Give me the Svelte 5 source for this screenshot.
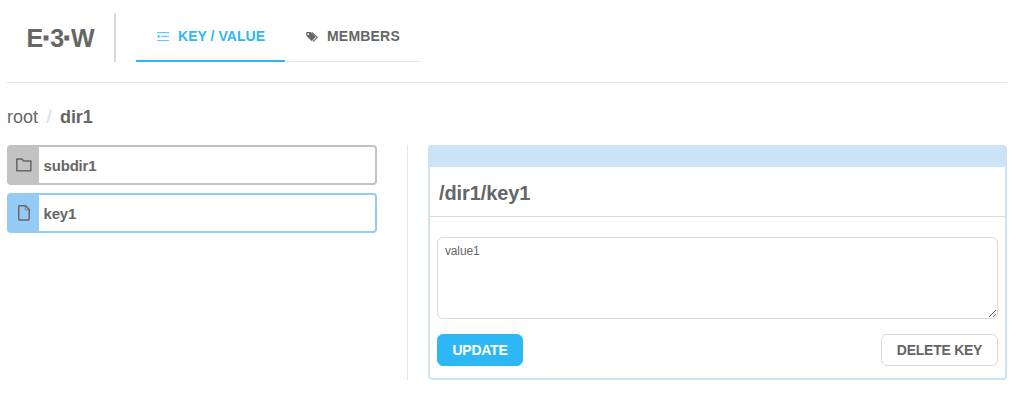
<script>
  const entries = [
    { name: 'subdir1', kind: 'dir' },
    { name: 'key1', kind: 'key' }
  ];
  let value = $state('value1');
</script>

<div class="page">
  <header>
    <div class="logo"><span>E<b>·</b>3<b>·</b>W</span></div>
    <nav>
      <a class="tab active">
        <svg width="12" height="12" viewBox="0 0 12 12" fill="none" stroke="currentColor">
          <path d="M0 1.5h12M4 5.5h8M0 9.5h12" opacity=".75" />
          <path d="M0 2.5h12M4 4.5h8" opacity=".2" />
          <path d="M0 5.5l2.5-1.7v3.4z" fill="currentColor" stroke="none" />
        </svg>
        <span class="kv">KEY / VALUE</span>
      </a>
      <a class="tab">
        <svg width="12" height="12" viewBox="0 0 12 12">
          <path fill="currentColor" fill-rule="evenodd" d="M.2 1.1h4.5l4.9 4.9-3.8 4.3L.4 5.1zM2.2 2.2a.9.9 0 1 0 .1 1.8.9.9 0 0 0-.1-1.8z" />
          <path d="M5.8 1.4l5.4 4.9-4 4.3" fill="none" stroke="currentColor" stroke-width="1.2" />
        </svg>
        <span class="members">MEMBERS</span>
      </a>
    </nav>
  </header>

  <div class="crumbs"><span class="root">root</span><i>/</i><b>dir1</b></div>

  <main>
    <section class="list">
      {#each entries as entry}
        <div class="entry {entry.kind}">
          <div class="icon">
            {#if entry.kind === 'dir'}
              <svg width="16" height="14" viewBox="0 0 16 14" fill="none" stroke="#666" stroke-width="1.5" stroke-linejoin="round">
                <path d="M.8 1h5.2l1.7 2.1h7.2v9.6H.8z" />
              </svg>
            {:else}
              <svg width="12" height="16" viewBox="0 0 12 16" fill="none" stroke="#666" stroke-width="1.5" stroke-linejoin="round">
                <path d="M1.7.8h5.8l3.7 3.8v9.2q0 1.2-1.2 1.2H1.9Q.7 15 .7 13.8V1.8Q.7.8 1.7.8z" />
                <path d="M7.3 1v3.8h3.8" stroke-width="1" opacity=".7" />
              </svg>
            {/if}
          </div>
          <span>{entry.name}</span>
        </div>
      {/each}
    </section>
    <section class="detail">
      <div class="panel">
        <div class="bar"></div>
        <h1><span>/dir1/key1</span></h1>
        <div class="body">
          <textarea bind:value spellcheck="false"></textarea>
          <div class="actions">
            <button class="primary"><span>UPDATE</span></button>
            <button class="delete"><span>DELETE KEY</span></button>
          </div>
        </div>
      </div>
    </section>
  </main>
</div>

<style>
  :global(body) {
    margin: 0;
    background: #fff;
  }
  .page,
  .page * {
    box-sizing: border-box;
  }
  .page {
    width: 1000px;
    margin-left: 7px;
    color: #666;
    font-family: "Liberation Sans", Arial, sans-serif;
  }
  header {
    display: flex;
    height: 83px;
    padding-top: 13px;
    border-bottom: 1px solid #e6e6e6;
  }
  .logo {
    display: flex;
    width: 109px;
    height: 49px;
    padding-left: 19.5px;
    border-right: 2px solid #d9d9d9;
    font-size: 25px;
    font-weight: 700;
    line-height: 51px;
    white-space: nowrap;
  }
  .logo span {
    letter-spacing: -0.7px;
  }
  .logo b {
    -webkit-text-stroke: 1.2px currentColor;
    stroke-linejoin: round;
    paint-order: stroke;
  }
  nav {
    display: flex;
    margin-left: 20px;
    height: 49px;
  }
  .tab {
    display: flex;
    width: 135px;
    height: 49px;
    padding-left: 21px;
    gap: 9px;
    border-bottom: 1px solid #e6e6e6;
    font-size: 14px;
    font-weight: 700;
    line-height: 46px;
    white-space: nowrap;
  }
  .tab.active {
    width: 149px;
    border-bottom: 2px solid #2db7f5;
    color: #2db7f5;
  }
  .kv {
    letter-spacing: 0.05px;
  }
  .members {
    letter-spacing: 0.2px;
  }
  .tab svg {
    flex: none;
    margin-top: 18px;
  }
  .crumbs {
    height: 62px;
    padding-top: 22px;
    font-size: 18px;
    line-height: 24px;
    white-space: pre;
  }
  .crumbs i {
    margin: 0 8.5px;
    color: #d9d9d9;
    font-style: normal;
  }
  .crumbs b {
    letter-spacing: -0.1px;
  }
  main {
    display: flex;
    height: 235px;
  }
  .list {
    display: flex;
    flex-direction: column;
    gap: 8px;
    width: 400px;
  }
  .entry {
    display: flex;
    width: 370px;
    height: 40px;
    border: 2px solid #c2c2c2;
    border-radius: 4px;
    font-size: 15px;
    font-weight: 700;
    line-height: 38px;
    letter-spacing: -0.18px;
  }
  .entry .icon {
    display: flex;
    align-items: center;
    justify-content: center;
    width: 30px;
    margin-right: 4.5px;
    background: #c2c2c2;
  }
  .entry.key .icon {
    background: #95caf4;
  }
  .entry.key {
    border-color: #95caf4;
  }
  .detail {
    width: 600px;
    padding-left: 20px;
    border-left: 1px solid #e6e6e6;
  }
  .panel {
    height: 235px;
    border: 2px solid #cce3f6;
    border-radius: 4px;
  }
  .bar {
    height: 20px;
    background: #cce3f6;
  }
  h1 {
    height: 50px;
    margin: 0;
    padding-left: 9px;
    border-bottom: 1px solid #d9d9d9;
    font-size: 20px;
    line-height: 52px;
    letter-spacing: -0.1px;
  }
  .body {
    padding: 20px 7px 0;
  }
  textarea {
    display: block;
    width: 100%;
    height: 82px;
    margin: 0;
    padding: 4px 7px;
    border: 1px solid #d9d9d9;
    border-radius: 6px;
    outline: none;
    background: #fff;
    color: #666;
    font: 12px/18px "Liberation Sans", Arial, sans-serif;
    letter-spacing: -0.15px;
    resize: vertical;
  }
  .actions {
    display: flex;
    justify-content: space-between;
    margin-top: 15px;
  }
  button {
    width: 86px;
    height: 32px;
    padding: 0;
    border: 1px solid #2db7f5;
    border-radius: 6px;
    background: #2db7f5;
    color: #fff;
    font: 700 14px/30px "Liberation Sans", Arial, sans-serif;
    letter-spacing: -0.25px;
    white-space: nowrap;
  }
  .delete {
    width: 117px;
    border-color: #d9d9d9;
    background: #fff;
    color: #666;
  }
</style>
